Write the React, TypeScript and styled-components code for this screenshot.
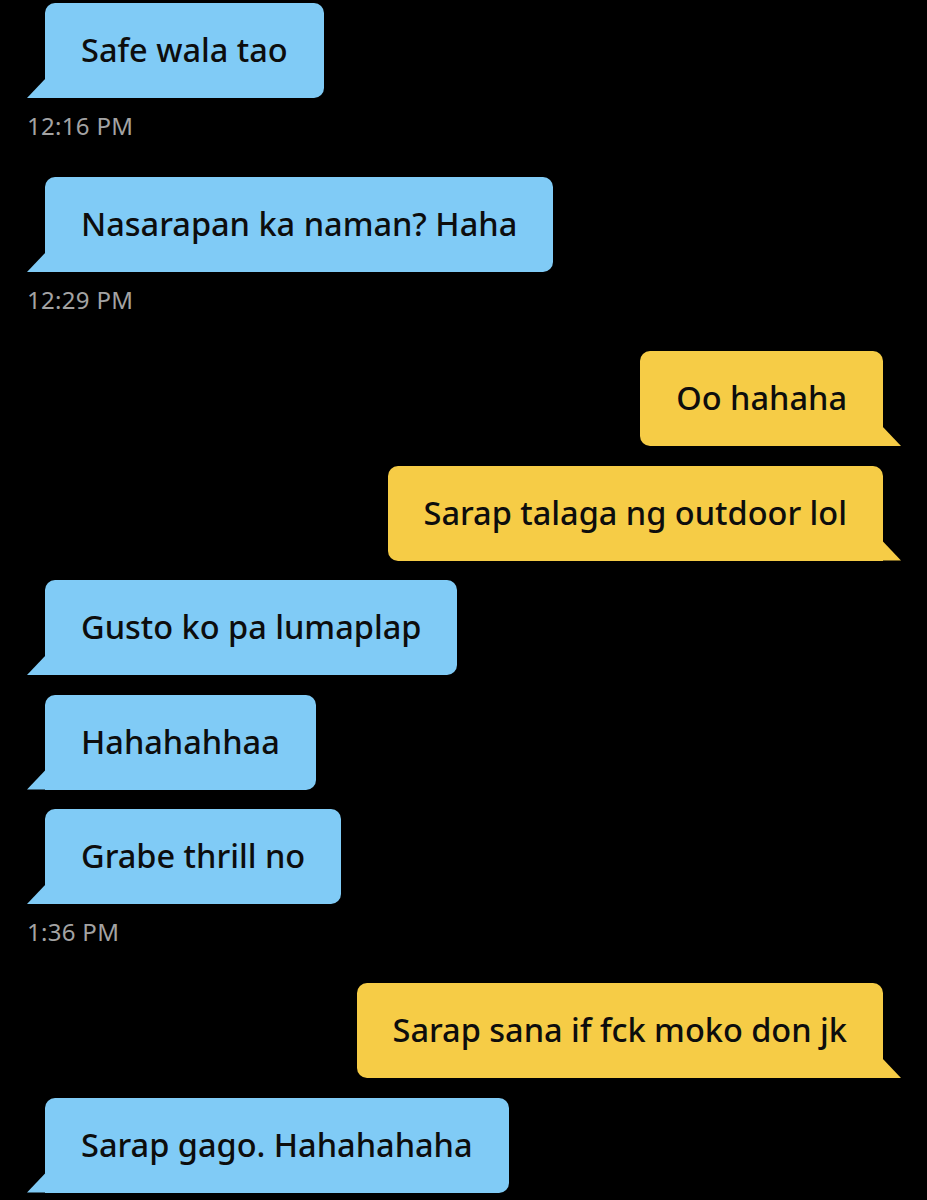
import styled, { createGlobalStyle } from "styled-components";

type Side = "in" | "out";

interface Message {
  side: Side;
  text: string;
  time?: string;
}

const messages: Message[] = [
  { side: "in", text: "Safe wala tao", time: "12:16 PM" },
  { side: "in", text: "Nasarapan ka naman? Haha", time: "12:29 PM" },
  { side: "out", text: "Oo hahaha" },
  { side: "out", text: "Sarap talaga ng outdoor lol" },
  { side: "in", text: "Gusto ko pa lumaplap" },
  { side: "in", text: "Hahahahhaa" },
  { side: "in", text: "Grabe thrill no", time: "1:36 PM" },
  { side: "out", text: "Sarap sana if fck moko don jk" },
  { side: "in", text: "Sarap gago. Hahahahaha" },
];

const colors = {
  bg: "#000000",
  incoming: "#80cbf6",
  outgoing: "#f6cc46",
  ink: "#0d0d0d",
  time: "#a3a3a3",
};

const GlobalStyle = createGlobalStyle`
  html, body {
    margin: 0;
    background: ${colors.bg};
  }
  body {
    font-family: "Noto Sans", "Open Sans", sans-serif;
  }
`;

export default function App() {
  return (
    <>
      <GlobalStyle />
      <Thread>
        {messages.map((m, i) => {
          const grouped = !m.time;
          return (
            <Group key={i} $side={m.side} $gap={grouped ? 19.5 : 37}>
              <Bubble $side={m.side}>{m.text}</Bubble>
              {m.time && <Stamp>{m.time}</Stamp>}
            </Group>
          );
        })}
      </Thread>
    </>
  );
}

const Thread = styled.main`
  display: flex;
  flex-direction: column;
  padding: 3px 44px 0 27px;
  min-height: 1200px;
  box-sizing: border-box;
`;

const Group = styled.div<{ $side: Side; $gap: number }>`
  display: flex;
  flex-direction: column;
  align-items: ${(p) => (p.$side === "in" ? "flex-start" : "flex-end")};
  margin-bottom: ${(p) => p.$gap}px;
`;

const Bubble = styled.div<{ $side: Side }>`
  position: relative;
  box-sizing: border-box;
  height: 95px;
  display: flex;
  align-items: center;
  padding: 0 36px 2px 36px;
  margin-left: ${(p) => (p.$side === "in" ? "18px" : "0")};
  background: ${(p) => (p.$side === "in" ? colors.incoming : colors.outgoing)};
  color: ${colors.ink};
  font-size: 32.5px;
  font-weight: 500;
  white-space: nowrap;
  border-radius: ${(p) => (p.$side === "in" ? "10px 10px 10px 0" : "10px 10px 0 10px")};

  &::before {
    content: "";
    position: absolute;
    bottom: 0;
    width: 19px;
    height: 20px;
    background: inherit;
    ${(p) =>
      p.$side === "in"
        ? "left: -18px; clip-path: polygon(100% 0, 100% 100%, 0 100%);"
        : "right: -18px; clip-path: polygon(0 0, 100% 100%, 0 100%);"}
  }
`;

const Stamp = styled.div`
  margin-top: 14px;
  font-size: 24px;
  line-height: 28px;
  color: ${colors.time};
  letter-spacing: 0.3px;
`;
